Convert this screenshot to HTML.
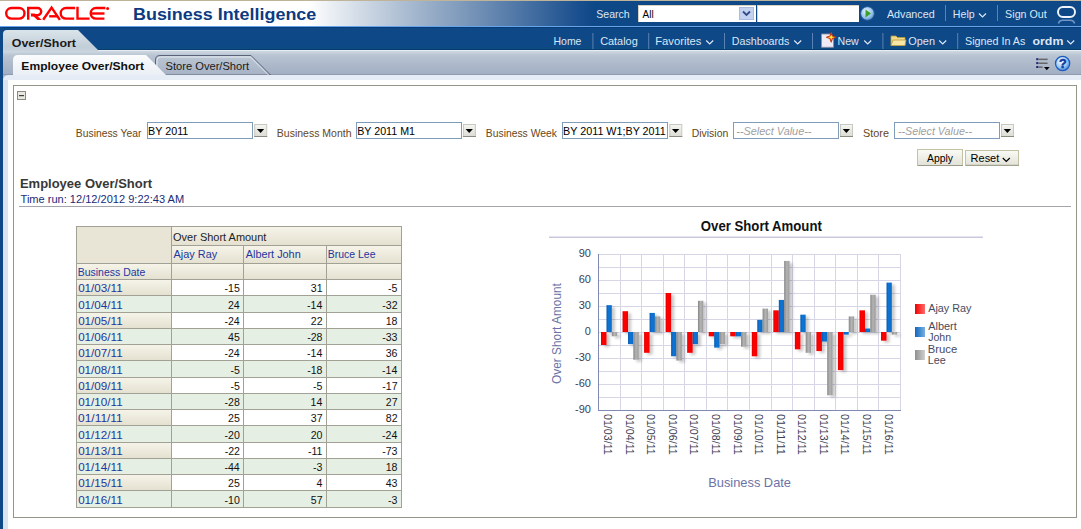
<!DOCTYPE html>
<html><head><meta charset="utf-8"><title>Oracle BI - Employee Over/Short</title>
<style>html,body{margin:0;padding:0;background:#fff;overflow:hidden}svg{display:block;font-family:"Liberation Sans",sans-serif}</style>
</head><body><svg width="1081" height="529" viewBox="0 0 1081 529" font-family="Liberation Sans, sans-serif"><defs>
<linearGradient id="hdr" x1="0" y1="0" x2="1081" y2="0" gradientUnits="userSpaceOnUse">
 <stop offset="0" stop-color="#ffffff"/><stop offset="0.285" stop-color="#ffffff"/>
 <stop offset="0.33" stop-color="#d4dde8"/><stop offset="0.38" stop-color="#a6b9cf"/>
 <stop offset="0.43" stop-color="#7c98ba"/><stop offset="0.48" stop-color="#4e76a6"/>
 <stop offset="0.535" stop-color="#1a4f8e"/><stop offset="0.55" stop-color="#0e4886"/>
 <stop offset="1" stop-color="#0e4886"/></linearGradient>
<linearGradient id="band" x1="0" y1="0" x2="0" y2="1">
 <stop offset="0" stop-color="#cdd8e1"/><stop offset="0.2" stop-color="#b8c4d2"/><stop offset="0.6" stop-color="#adb9ca"/><stop offset="1" stop-color="#a2aec2"/></linearGradient>
<linearGradient id="tab1" x1="0" y1="0" x2="0" y2="1">
 <stop offset="0" stop-color="#dae4ea"/><stop offset="0.8" stop-color="#c2ced8"/><stop offset="1" stop-color="#c6d2dc"/></linearGradient>
<linearGradient id="acttab" x1="0" y1="0" x2="0" y2="1">
 <stop offset="0" stop-color="#fbfcfd"/><stop offset="1" stop-color="#e6ecf4"/></linearGradient>
<linearGradient id="inact" x1="0" y1="0" x2="0" y2="1">
 <stop offset="0" stop-color="#bcc7d4"/><stop offset="1" stop-color="#a6b2c5"/></linearGradient>
<linearGradient id="hcell" x1="0" y1="0" x2="0" y2="1">
 <stop offset="0" stop-color="#f7f5ea"/><stop offset="1" stop-color="#e4e1d1"/></linearGradient>
<linearGradient id="btn" x1="0" y1="0" x2="0" y2="1">
 <stop offset="0" stop-color="#fbfbf6"/><stop offset="1" stop-color="#e2e2d8"/></linearGradient>
<linearGradient id="ddb" x1="0" y1="0" x2="0" y2="1">
 <stop offset="0" stop-color="#f6f6f2"/><stop offset="1" stop-color="#dcdcd4"/></linearGradient>
<linearGradient id="gred" x1="0" y1="0" x2="1" y2="0">
 <stop offset="0" stop-color="#e00000"/><stop offset="0.35" stop-color="#ff0000"/><stop offset="1" stop-color="#f20000"/></linearGradient>
<linearGradient id="gblue" x1="0" y1="0" x2="1" y2="0">
 <stop offset="0" stop-color="#0658b0"/><stop offset="0.4" stop-color="#0a74d4"/><stop offset="1" stop-color="#0a6cc8"/></linearGradient>
<linearGradient id="ggrey" x1="0" y1="0" x2="1" y2="0">
 <stop offset="0" stop-color="#888888"/><stop offset="0.5" stop-color="#b4b4b4"/><stop offset="1" stop-color="#9a9a9a"/></linearGradient>
<linearGradient id="lred" x1="0" y1="0" x2="1" y2="0">
 <stop offset="0" stop-color="#f00000"/><stop offset="1" stop-color="#ff6a6a"/></linearGradient>
<linearGradient id="lblue" x1="0" y1="0" x2="1" y2="0">
 <stop offset="0" stop-color="#1068c0"/><stop offset="1" stop-color="#7ab0e0"/></linearGradient>
<linearGradient id="lgrey" x1="0" y1="0" x2="1" y2="0">
 <stop offset="0" stop-color="#909090"/><stop offset="1" stop-color="#d0d0d0"/></linearGradient>
<linearGradient id="shadow" x1="0" y1="0" x2="1" y2="0">
 <stop offset="0" stop-color="#c8c8c8" stop-opacity="0.7"/><stop offset="1" stop-color="#e8e8e8" stop-opacity="0"/></linearGradient>
<filter id="ds" x="-20%" y="-20%" width="160%" height="160%"><feGaussianBlur in="SourceAlpha" stdDeviation="1.6"/><feOffset dx="3" dy="1.5"/><feComponentTransfer><feFuncA type="linear" slope="0.22"/></feComponentTransfer><feMerge><feMergeNode/><feMergeNode in="SourceGraphic"/></feMerge></filter>
<radialGradient id="helpg" cx="0.4" cy="0.35" r="0.7">
 <stop offset="0" stop-color="#ffffff"/><stop offset="0.6" stop-color="#9cc8f4"/><stop offset="1" stop-color="#3a7ed0"/></radialGradient>
<radialGradient id="gog" cx="0.4" cy="0.35" r="0.7">
 <stop offset="0" stop-color="#e8f4ff"/><stop offset="0.7" stop-color="#8ebce8"/><stop offset="1" stop-color="#4a84c4"/></radialGradient>
</defs>
<rect x="0" y="0" width="1081" height="529" fill="#ffffff"/>
<rect x="0" y="0" width="1081" height="1" fill="#bfb39a"/>
<rect x="0" y="1" width="1081" height="25" fill="url(#hdr)"/>
<rect x="0" y="26" width="1081" height="1" fill="#66a4ec"/>
<rect x="0" y="27" width="1081" height="22" fill="#0e4886"/>
<rect x="0" y="47" width="1081" height="2" fill="#0b4c82"/>
<rect x="0" y="27" width="1081" height="1" fill="#0a3c76"/>
<rect x="0" y="27" width="3" height="502" fill="#0e4886"/>
<rect x="3" y="80" width="5" height="449" fill="#dae4f0"/>
<rect x="97" y="49" width="984" height="1" fill="#083c70"/>
<rect x="98" y="50" width="983" height="1" fill="#e6ecf2"/>
<rect x="3" y="51" width="1078" height="23" fill="url(#band)"/>
<rect x="3" y="74" width="1078" height="1" fill="#8e9ab0"/>
<rect x="3" y="75" width="1078" height="5" fill="#e6ecf5"/>
<path d="M3,51 L3,34 Q3,30 7,30 L78,30 L98,50 L98,51 Z" fill="url(#tab1)"/>
<path d="M155.5,75 L155.5,60 Q155.5,55.5 160,55.5 L251,55.5 L270.5,75 Z" fill="url(#inact)" stroke="#5a6478" stroke-width="1"/>
<path d="M157,75 L157,60.5 Q157,57 160.5,57 L250.5,57 L268.5,75" fill="none" stroke="#f0f4f8" stroke-width="1" opacity="0.8"/>
<path d="M13,80 L13,60 Q13,55 18,55 L146,55 L166,75 L166,80 Z" fill="url(#acttab)"/>
<rect x="3" y="75" width="1078" height="5" fill="#e6ecf5"/>
<path d="M3,75 L8,75 Q3.5,75.5 3,80 Z" fill="#a9b5c6"/>
<rect x="13.5" y="85.5" width="1063" height="432" fill="#ffffff" stroke="#95958a" stroke-width="1"/>
<g fill="none" stroke="#ff0000" stroke-width="2.4"><rect x="6.2" y="8" width="18.3" height="10.6" rx="5.3"/><path d="M28.2,19.8 L28.2,8 L37.6,8 A3.6,3.6 0 0 1 37.6,15.2 L31,15.2"/><path d="M30.4,13.6 L34.6,13.6 L41.8,19.9 L37.4,19.9 Z" fill="#ff0000" stroke="none"/><path d="M43.2,19.8 L51.6,7.6 L59.9,19.8"/><path d="M49.2,16.3 L57.4,16.3"/><path d="M75.2,8 L66,8 A5.3,5.3 0 0 0 66,18.6 L74.2,18.6"/><path d="M77.5,6.8 L77.5,18.6 L89.6,18.6"/><path d="M105.4,8 L96,8 A5.3,5.3 0 0 0 96,18.6 L104.4,18.6"/><path d="M92,13.5 L104.5,13.5"/></g><circle cx="107.6" cy="8.4" r="1.5" fill="#ff0000"/>
<text x="133.00" y="19.90" font-size="17.00" fill="#0d3a80" font-weight="bold" textLength="183.32" lengthAdjust="spacingAndGlyphs" >Business Intelligence</text>
<text x="596.22" y="18.00" font-size="11.50" fill="#dce7f5" textLength="33.47" lengthAdjust="spacingAndGlyphs" >Search</text>
<rect x="638" y="5" width="118" height="17" fill="#ffffff"/><rect x="638" y="5" width="118" height="1" fill="#d8d0c0"/><rect x="638" y="5" width="1" height="17" fill="#d8d0c0"/>
<rect x="739.5" y="7.5" width="14" height="12" fill="#c2d2f0" stroke="#a8bce0"/>
<path d="M743,11.5 L746.5,15 L750,11.5" fill="none" stroke="#334c88" stroke-width="1.8"/>
<text x="642.58" y="18.00" font-size="11.50" fill="#000000" textLength="11.09" lengthAdjust="spacingAndGlyphs" >All</text>
<rect x="757" y="5" width="102" height="17" fill="#ffffff"/><rect x="757" y="5" width="102" height="1" fill="#d8d0c0"/><rect x="757" y="5" width="1" height="17" fill="#d8d0c0"/>
<circle cx="867.5" cy="13.5" r="6.8" fill="url(#gog)" stroke="#2a5a9a" stroke-width="0.8"/>
<path d="M865.5,9.5 L871,13.5 L865.5,17.5 Z" fill="#3aa02a"/>
<text x="886.88" y="18.00" font-size="11.50" fill="#dce7f5" textLength="47.81" lengthAdjust="spacingAndGlyphs" >Advanced</text>
<rect x="945" y="5" width="1" height="16" fill="#5a82b4"/>
<text x="952.83" y="18.00" font-size="11.50" fill="#dce7f5" textLength="21.81" lengthAdjust="spacingAndGlyphs" >Help</text>
<path d="M979.0,13.5 L982.5,17.0 L986.0,13.5" fill="none" stroke="#dce7f5" stroke-width="1.2"/>
<rect x="997" y="5" width="1" height="16" fill="#5a82b4"/>
<text x="1005.12" y="18.00" font-size="11.50" fill="#dce7f5" textLength="41.66" lengthAdjust="spacingAndGlyphs" >Sign Out</text>
<rect x="1058" y="7" width="17" height="9.9" rx="4.95" fill="none" stroke="#eef4fc" stroke-width="2"/>
<path d="M1058.5,23.5 Q1059,20.5 1063,20.3 L1070,20.3 Q1074,20.5 1074.5,23.5" fill="none" stroke="#6f96c6" stroke-width="1.6"/>
<text x="553.54" y="44.80" font-size="11.50" fill="#dce7f5" textLength="27.92" lengthAdjust="spacingAndGlyphs" >Home</text>
<rect x="592.4" y="33" width="1" height="16" fill="#5a82b4"/>
<rect x="648.2" y="33" width="1" height="16" fill="#5a82b4"/>
<rect x="724.0" y="33" width="1" height="16" fill="#5a82b4"/>
<rect x="812.0" y="33" width="1" height="16" fill="#5a82b4"/>
<rect x="882.4" y="33" width="1" height="16" fill="#5a82b4"/>
<rect x="957.2" y="33" width="1" height="16" fill="#5a82b4"/>
<text x="600.14" y="44.80" font-size="11.50" fill="#dce7f5" textLength="37.65" lengthAdjust="spacingAndGlyphs" >Catalog</text>
<text x="655.28" y="44.80" font-size="11.50" fill="#dce7f5" textLength="46.13" lengthAdjust="spacingAndGlyphs" >Favorites</text>
<path d="M706.2,40.5 L709.7,44.0 L713.2,40.5" fill="none" stroke="#dce7f5" stroke-width="1.2"/>
<text x="731.72" y="44.80" font-size="11.50" fill="#dce7f5" textLength="57.66" lengthAdjust="spacingAndGlyphs" >Dashboards</text>
<path d="M794.2,40.5 L797.7,44.0 L801.2,40.5" fill="none" stroke="#dce7f5" stroke-width="1.2"/>
<path d="M821.5,34 L830,34 L833.5,37.5 L833.5,47.3 L821.5,47.3 Z" fill="#ecebf6" stroke="#8c8ca4" stroke-width="0.9"/>
<path d="M831.2,32.6 L832.4,36.1 L835.9,37.3 L832.4,38.5 L831.2,42 L830,38.5 L826.5,37.3 L830,36.1 Z" fill="#ffe840" stroke="#c83a10" stroke-width="1.1" stroke-linejoin="round"/>
<text x="837.53" y="44.80" font-size="11.50" fill="#dce7f5" textLength="21.24" lengthAdjust="spacingAndGlyphs" >New</text>
<path d="M864.2,40.5 L867.7,44.0 L871.2,40.5" fill="none" stroke="#dce7f5" stroke-width="1.2"/>
<path d="M891,36 L896,36 L897.5,37.5 L905,37.5 L905,45.5 L891,45.5 Z" fill="#f2d98a" stroke="#b89a40" stroke-width="0.8"/>
<path d="M891,45.5 L893,40 L906,40 L905,45.5 Z" fill="#f8e6a6" stroke="#b89a40" stroke-width="0.8"/>
<text x="908.29" y="44.80" font-size="11.50" fill="#dce7f5" textLength="26.73" lengthAdjust="spacingAndGlyphs" >Open</text>
<path d="M939.2,40.5 L942.7,44.0 L946.2,40.5" fill="none" stroke="#dce7f5" stroke-width="1.2"/>
<text x="965.02" y="44.80" font-size="11.50" fill="#dce7f5" textLength="60.37" lengthAdjust="spacingAndGlyphs" >Signed In As</text>
<text x="1032.52" y="44.80" font-size="11.50" fill="#dce7f5" font-weight="bold" textLength="30.85" lengthAdjust="spacingAndGlyphs" >ordm</text>
<path d="M1067.2,40.5 L1070.7,44.0 L1074.2,40.5" fill="none" stroke="#dce7f5" stroke-width="1.2"/>
<text x="11.79" y="47.00" font-size="11.50" fill="#1a1a1a" font-weight="bold" textLength="64.16" lengthAdjust="spacingAndGlyphs" >Over/Short</text>
<text x="21.39" y="70.00" font-size="11.50" fill="#101010" font-weight="bold" textLength="122.65" lengthAdjust="spacingAndGlyphs" >Employee Over/Short</text>
<text x="165.50" y="70.00" font-size="11.50" fill="#1a1a1a" textLength="83.58" lengthAdjust="spacingAndGlyphs" >Store Over/Short</text>
<g><rect x="1038.8" y="58.6" width="8.8" height="1.5" fill="#666666"/><rect x="1038.8" y="62.5" width="8.8" height="1.5" fill="#666666"/><rect x="1038.8" y="66.4" width="3.8" height="1.5" fill="#666666"/><rect x="1036.2" y="58.2" width="2.2" height="2" fill="#262672"/><rect x="1036.2" y="62.1" width="2.2" height="2" fill="#262672"/><rect x="1036.2" y="66" width="2.2" height="2" fill="#262672"/><path d="M1044,67 L1049.6,67 L1046.8,70.2 Z" fill="#000000"/></g>
<circle cx="1062.6" cy="63.5" r="7.1" fill="url(#helpg)" stroke="#1c5cc0" stroke-width="1.3"/>
<text x="1062.7" y="67.9" font-size="12.5" font-weight="bold" fill="#0b3a9e" stroke="#0b3a9e" stroke-width="0.5" text-anchor="middle">?</text>
<rect x="17.5" y="91.5" width="8" height="8" fill="#e8e8e0" stroke="#8a8a80"/>
<rect x="19" y="95" width="5" height="1.2" fill="#404040"/>
<text x="75.85" y="136.80" font-size="11.50" fill="#66461a" textLength="65.51" lengthAdjust="spacingAndGlyphs" >Business Year</text>
<text x="276.84" y="136.80" font-size="11.50" fill="#66461a" textLength="74.64" lengthAdjust="spacingAndGlyphs" >Business Month</text>
<text x="485.85" y="136.80" font-size="11.50" fill="#66461a" textLength="71.03" lengthAdjust="spacingAndGlyphs" >Business Week</text>
<text x="691.64" y="136.80" font-size="11.50" fill="#66461a" textLength="36.74" lengthAdjust="spacingAndGlyphs" >Division</text>
<text x="863.01" y="136.80" font-size="11.50" fill="#66461a" textLength="25.97" lengthAdjust="spacingAndGlyphs" >Store</text>
<rect x="147.5" y="122.5" width="105.0" height="16" fill="#ffffff" stroke="#7f9db9"/><text x="148.12" y="134.70" font-size="11.50" fill="#000000" textLength="40.21" lengthAdjust="spacingAndGlyphs" >BY 2011</text>
<rect x="254.7" y="124.5" width="12" height="12" fill="url(#ddb)" stroke="#c8c8c0" stroke-width="1"/><rect x="254.2" y="136" width="13" height="1" fill="#8a8a80"/><path d="M256.9,129 L264.2,129 L260.6,133 Z" fill="#000000"/>
<rect x="356.5" y="122.5" width="105.0" height="16" fill="#ffffff" stroke="#7f9db9"/><text x="357.22" y="134.70" font-size="11.50" fill="#000000" textLength="57.80" lengthAdjust="spacingAndGlyphs" >BY 2011 M1</text>
<rect x="463.4" y="124.5" width="12" height="12" fill="url(#ddb)" stroke="#c8c8c0" stroke-width="1"/><rect x="462.9" y="136" width="13" height="1" fill="#8a8a80"/><path d="M465.6,129 L472.9,129 L469.2,133 Z" fill="#000000"/>
<rect x="562.5" y="122.5" width="105.0" height="16" fill="#ffffff" stroke="#7f9db9"/><text x="563.12" y="134.70" font-size="11.50" fill="#000000" textLength="102.61" lengthAdjust="spacingAndGlyphs" >BY 2011 W1;BY 2011</text>
<rect x="669.8" y="124.5" width="12" height="12" fill="url(#ddb)" stroke="#c8c8c0" stroke-width="1"/><rect x="669.3" y="136" width="13" height="1" fill="#8a8a80"/><path d="M672.0,129 L679.3,129 L675.6,133 Z" fill="#000000"/>
<rect x="733.5" y="122.5" width="105.0" height="16" fill="#ffffff" stroke="#7f9db9"/><text x="736.35" y="134.70" font-size="11.50" fill="#a0a0a0" font-style="italic" textLength="75.09" lengthAdjust="spacingAndGlyphs" >--Select Value--</text>
<rect x="840.5" y="124.5" width="12" height="12" fill="url(#ddb)" stroke="#c8c8c0" stroke-width="1"/><rect x="840.0" y="136" width="13" height="1" fill="#8a8a80"/><path d="M842.7,129 L850.0,129 L846.4,133 Z" fill="#000000"/>
<rect x="894.5" y="122.5" width="105.0" height="16" fill="#ffffff" stroke="#7f9db9"/><text x="897.95" y="134.70" font-size="11.50" fill="#a0a0a0" font-style="italic" textLength="74.08" lengthAdjust="spacingAndGlyphs" >--Select Value--</text>
<rect x="1001.5" y="124.5" width="12" height="12" fill="url(#ddb)" stroke="#c8c8c0" stroke-width="1"/><rect x="1001.0" y="136" width="13" height="1" fill="#8a8a80"/><path d="M1003.7,129 L1011.0,129 L1007.4,133 Z" fill="#000000"/>
<rect x="917.5" y="149.5" width="45" height="16" fill="url(#btn)" stroke="#c4c2a4"/>
<rect x="918" y="165" width="45" height="1" fill="#9a9a88"/>
<text x="926.98" y="161.60" font-size="11.50" fill="#000000" textLength="26.05" lengthAdjust="spacingAndGlyphs" >Apply</text>
<rect x="965.5" y="150.5" width="53" height="15" fill="url(#btn)" stroke="#c4c2a4"/>
<rect x="966" y="164.8" width="53" height="1" fill="#9a9a88"/>
<text x="970.60" y="161.60" font-size="11.50" fill="#000000" textLength="28.68" lengthAdjust="spacingAndGlyphs" >Reset</text>
<path d="M1002.8,158.0 L1006.3,161.5 L1009.8,158.0" fill="none" stroke="#000000" stroke-width="1.2"/>
<text x="19.93" y="187.50" font-size="12.50" fill="#383838" font-weight="bold" textLength="132.13" lengthAdjust="spacingAndGlyphs" >Employee Over/Short</text>
<text x="20.56" y="202.50" font-size="11.50" fill="#182c78" textLength="163.55" lengthAdjust="spacingAndGlyphs" >Time run: 12/12/2012 9:22:43 AM</text>
<rect x="19" y="206" width="1052" height="1" fill="#a4a4ac"/>
<rect x="76" y="226" width="326" height="53" fill="#e8e6d8"/>
<rect x="76" y="226" width="95" height="37" fill="#e8e5d6"/>
<rect x="171" y="226" width="231" height="19" fill="url(#hcell)"/>
<rect x="171" y="245" width="231" height="18" fill="url(#hcell)"/>
<rect x="76" y="263" width="326" height="16" fill="url(#hcell)"/>
<rect x="76" y="279" width="95" height="16" fill="url(#hcell)"/>
<rect x="171" y="279" width="231" height="16" fill="#ffffff"/>
<rect x="76" y="295" width="326" height="17" fill="#e6efe4"/>
<rect x="76" y="312" width="95" height="16" fill="url(#hcell)"/>
<rect x="171" y="312" width="231" height="16" fill="#ffffff"/>
<rect x="76" y="328" width="326" height="16" fill="#e6efe4"/>
<rect x="76" y="344" width="95" height="16" fill="url(#hcell)"/>
<rect x="171" y="344" width="231" height="16" fill="#ffffff"/>
<rect x="76" y="360" width="326" height="17" fill="#e6efe4"/>
<rect x="76" y="377" width="95" height="16" fill="url(#hcell)"/>
<rect x="171" y="377" width="231" height="16" fill="#ffffff"/>
<rect x="76" y="393" width="326" height="16" fill="#e6efe4"/>
<rect x="76" y="409" width="95" height="16" fill="url(#hcell)"/>
<rect x="171" y="409" width="231" height="16" fill="#ffffff"/>
<rect x="76" y="425" width="326" height="17" fill="#e6efe4"/>
<rect x="76" y="442" width="95" height="16" fill="url(#hcell)"/>
<rect x="171" y="442" width="231" height="16" fill="#ffffff"/>
<rect x="76" y="458" width="326" height="16" fill="#e6efe4"/>
<rect x="76" y="474" width="95" height="16" fill="url(#hcell)"/>
<rect x="171" y="474" width="231" height="16" fill="#ffffff"/>
<rect x="76" y="490" width="326" height="17" fill="#e6efe4"/>
<rect x="76" y="226" width="326" height="1" fill="#a2a196"/>
<rect x="171" y="245" width="231" height="1" fill="#a2a196"/>
<rect x="76" y="263" width="326" height="1" fill="#a2a196"/>
<rect x="76" y="279" width="326" height="1" fill="#a2a196"/>
<rect x="76" y="295" width="326" height="1" fill="#a2a196"/>
<rect x="76" y="312" width="326" height="1" fill="#a2a196"/>
<rect x="76" y="328" width="326" height="1" fill="#a2a196"/>
<rect x="76" y="344" width="326" height="1" fill="#a2a196"/>
<rect x="76" y="360" width="326" height="1" fill="#a2a196"/>
<rect x="76" y="377" width="326" height="1" fill="#a2a196"/>
<rect x="76" y="393" width="326" height="1" fill="#a2a196"/>
<rect x="76" y="409" width="326" height="1" fill="#a2a196"/>
<rect x="76" y="425" width="326" height="1" fill="#a2a196"/>
<rect x="76" y="442" width="326" height="1" fill="#a2a196"/>
<rect x="76" y="458" width="326" height="1" fill="#a2a196"/>
<rect x="76" y="474" width="326" height="1" fill="#a2a196"/>
<rect x="76" y="490" width="326" height="1" fill="#a2a196"/>
<rect x="76" y="507" width="326" height="1" fill="#a2a196"/>
<rect x="76" y="226" width="1" height="282" fill="#a2a196"/>
<rect x="171" y="226" width="1" height="282" fill="#a2a196"/>
<rect x="243" y="245" width="1" height="263" fill="#a2a196"/>
<rect x="326" y="245" width="1" height="263" fill="#a2a196"/>
<rect x="401" y="226" width="1" height="282" fill="#a2a196"/>
<text x="173.08" y="241.00" font-size="11.50" fill="#1e1e1e" textLength="93.29" lengthAdjust="spacingAndGlyphs" >Over Short Amount</text>
<text x="173.58" y="257.50" font-size="11.50" fill="#2236a0" textLength="43.65" lengthAdjust="spacingAndGlyphs" >Ajay Ray</text>
<text x="245.78" y="257.50" font-size="11.50" fill="#2236a0" textLength="54.93" lengthAdjust="spacingAndGlyphs" >Albert John</text>
<text x="327.74" y="257.50" font-size="11.50" fill="#2236a0" textLength="47.73" lengthAdjust="spacingAndGlyphs" >Bruce Lee</text>
<text x="77.74" y="276.00" font-size="11.50" fill="#2236a0" textLength="67.52" lengthAdjust="spacingAndGlyphs" >Business Date</text>
<text x="78.15" y="292.00" font-size="11.50" fill="#2236a0" textLength="44.53" lengthAdjust="spacingAndGlyphs" >01/03/11</text>
<text x="224.56" y="292.00" font-size="11.50" fill="#111111" textLength="15.29" lengthAdjust="spacingAndGlyphs" >-15</text>
<text x="310.75" y="292.00" font-size="11.50" fill="#111111" textLength="11.77" lengthAdjust="spacingAndGlyphs" >31</text>
<text x="388.04" y="292.00" font-size="11.50" fill="#111111" textLength="9.41" lengthAdjust="spacingAndGlyphs" >-5</text>
<text x="78.15" y="309.00" font-size="11.50" fill="#2236a0" textLength="44.53" lengthAdjust="spacingAndGlyphs" >01/04/11</text>
<text x="227.94" y="309.00" font-size="11.50" fill="#111111" textLength="11.77" lengthAdjust="spacingAndGlyphs" >24</text>
<text x="307.02" y="309.00" font-size="11.50" fill="#111111" textLength="15.29" lengthAdjust="spacingAndGlyphs" >-14</text>
<text x="382.24" y="309.00" font-size="11.50" fill="#111111" textLength="15.29" lengthAdjust="spacingAndGlyphs" >-32</text>
<text x="78.15" y="325.00" font-size="11.50" fill="#2236a0" textLength="44.53" lengthAdjust="spacingAndGlyphs" >01/05/11</text>
<text x="224.42" y="325.00" font-size="11.50" fill="#111111" textLength="15.29" lengthAdjust="spacingAndGlyphs" >-24</text>
<text x="310.76" y="325.00" font-size="11.50" fill="#111111" textLength="11.77" lengthAdjust="spacingAndGlyphs" >22</text>
<text x="385.69" y="325.00" font-size="11.50" fill="#111111" textLength="11.77" lengthAdjust="spacingAndGlyphs" >18</text>
<text x="78.15" y="341.00" font-size="11.50" fill="#2236a0" textLength="44.53" lengthAdjust="spacingAndGlyphs" >01/06/11</text>
<text x="228.08" y="341.00" font-size="11.50" fill="#111111" textLength="11.77" lengthAdjust="spacingAndGlyphs" >45</text>
<text x="307.17" y="341.00" font-size="11.50" fill="#111111" textLength="15.29" lengthAdjust="spacingAndGlyphs" >-28</text>
<text x="382.18" y="341.00" font-size="11.50" fill="#111111" textLength="15.29" lengthAdjust="spacingAndGlyphs" >-33</text>
<text x="78.15" y="357.00" font-size="11.50" fill="#2236a0" textLength="44.53" lengthAdjust="spacingAndGlyphs" >01/07/11</text>
<text x="224.42" y="357.00" font-size="11.50" fill="#111111" textLength="15.29" lengthAdjust="spacingAndGlyphs" >-24</text>
<text x="307.02" y="357.00" font-size="11.50" fill="#111111" textLength="15.29" lengthAdjust="spacingAndGlyphs" >-14</text>
<text x="385.70" y="357.00" font-size="11.50" fill="#111111" textLength="11.77" lengthAdjust="spacingAndGlyphs" >36</text>
<text x="78.15" y="374.00" font-size="11.50" fill="#2236a0" textLength="44.53" lengthAdjust="spacingAndGlyphs" >01/08/11</text>
<text x="230.44" y="374.00" font-size="11.50" fill="#111111" textLength="9.41" lengthAdjust="spacingAndGlyphs" >-5</text>
<text x="307.17" y="374.00" font-size="11.50" fill="#111111" textLength="15.29" lengthAdjust="spacingAndGlyphs" >-18</text>
<text x="382.02" y="374.00" font-size="11.50" fill="#111111" textLength="15.29" lengthAdjust="spacingAndGlyphs" >-14</text>
<text x="78.15" y="390.00" font-size="11.50" fill="#2236a0" textLength="44.53" lengthAdjust="spacingAndGlyphs" >01/09/11</text>
<text x="230.44" y="390.00" font-size="11.50" fill="#111111" textLength="9.41" lengthAdjust="spacingAndGlyphs" >-5</text>
<text x="313.04" y="390.00" font-size="11.50" fill="#111111" textLength="9.41" lengthAdjust="spacingAndGlyphs" >-5</text>
<text x="382.24" y="390.00" font-size="11.50" fill="#111111" textLength="15.29" lengthAdjust="spacingAndGlyphs" >-17</text>
<text x="78.15" y="406.00" font-size="11.50" fill="#2236a0" textLength="44.53" lengthAdjust="spacingAndGlyphs" >01/10/11</text>
<text x="224.57" y="406.00" font-size="11.50" fill="#111111" textLength="15.29" lengthAdjust="spacingAndGlyphs" >-28</text>
<text x="310.54" y="406.00" font-size="11.50" fill="#111111" textLength="11.77" lengthAdjust="spacingAndGlyphs" >14</text>
<text x="385.76" y="406.00" font-size="11.50" fill="#111111" textLength="11.77" lengthAdjust="spacingAndGlyphs" >27</text>
<text x="78.14" y="422.00" font-size="11.50" fill="#2236a0" textLength="44.55" lengthAdjust="spacingAndGlyphs" >01/11/11</text>
<text x="228.08" y="422.00" font-size="11.50" fill="#111111" textLength="11.77" lengthAdjust="spacingAndGlyphs" >25</text>
<text x="310.76" y="422.00" font-size="11.50" fill="#111111" textLength="11.77" lengthAdjust="spacingAndGlyphs" >37</text>
<text x="385.76" y="422.00" font-size="11.50" fill="#111111" textLength="11.77" lengthAdjust="spacingAndGlyphs" >82</text>
<text x="78.15" y="439.00" font-size="11.50" fill="#2236a0" textLength="44.53" lengthAdjust="spacingAndGlyphs" >01/12/11</text>
<text x="224.52" y="439.00" font-size="11.50" fill="#111111" textLength="15.29" lengthAdjust="spacingAndGlyphs" >-20</text>
<text x="310.65" y="439.00" font-size="11.50" fill="#111111" textLength="11.77" lengthAdjust="spacingAndGlyphs" >20</text>
<text x="382.02" y="439.00" font-size="11.50" fill="#111111" textLength="15.29" lengthAdjust="spacingAndGlyphs" >-24</text>
<text x="78.15" y="455.00" font-size="11.50" fill="#2236a0" textLength="44.53" lengthAdjust="spacingAndGlyphs" >01/13/11</text>
<text x="224.64" y="455.00" font-size="11.50" fill="#111111" textLength="15.29" lengthAdjust="spacingAndGlyphs" >-22</text>
<text x="308.01" y="455.00" font-size="11.50" fill="#111111" textLength="14.51" lengthAdjust="spacingAndGlyphs" >-11</text>
<text x="382.18" y="455.00" font-size="11.50" fill="#111111" textLength="15.29" lengthAdjust="spacingAndGlyphs" >-73</text>
<text x="78.15" y="471.00" font-size="11.50" fill="#2236a0" textLength="44.53" lengthAdjust="spacingAndGlyphs" >01/14/11</text>
<text x="224.42" y="471.00" font-size="11.50" fill="#111111" textLength="15.29" lengthAdjust="spacingAndGlyphs" >-44</text>
<text x="313.06" y="471.00" font-size="11.50" fill="#111111" textLength="9.41" lengthAdjust="spacingAndGlyphs" >-3</text>
<text x="385.69" y="471.00" font-size="11.50" fill="#111111" textLength="11.77" lengthAdjust="spacingAndGlyphs" >18</text>
<text x="78.15" y="487.00" font-size="11.50" fill="#2236a0" textLength="44.53" lengthAdjust="spacingAndGlyphs" >01/15/11</text>
<text x="228.08" y="487.00" font-size="11.50" fill="#111111" textLength="11.77" lengthAdjust="spacingAndGlyphs" >25</text>
<text x="316.42" y="487.00" font-size="11.50" fill="#111111" textLength="5.88" lengthAdjust="spacingAndGlyphs" >4</text>
<text x="385.70" y="487.00" font-size="11.50" fill="#111111" textLength="11.77" lengthAdjust="spacingAndGlyphs" >43</text>
<text x="78.15" y="504.00" font-size="11.50" fill="#2236a0" textLength="44.53" lengthAdjust="spacingAndGlyphs" >01/16/11</text>
<text x="224.52" y="504.00" font-size="11.50" fill="#111111" textLength="15.29" lengthAdjust="spacingAndGlyphs" >-10</text>
<text x="310.76" y="504.00" font-size="11.50" fill="#111111" textLength="11.77" lengthAdjust="spacingAndGlyphs" >57</text>
<text x="388.06" y="504.00" font-size="11.50" fill="#111111" textLength="9.41" lengthAdjust="spacingAndGlyphs" >-3</text>
<text x="700.86" y="231.10" font-size="14.00" fill="#111111" font-weight="bold" textLength="120.99" lengthAdjust="spacingAndGlyphs" >Over Short Amount</text>
<rect x="549" y="236.5" width="434" height="1.5" fill="#c9c9dd"/>
<rect x="598" y="254" width="303" height="1" fill="#d6d6e6"/>
<rect x="598" y="267" width="303" height="1" fill="#d6d6e6"/>
<rect x="598" y="280" width="303" height="1" fill="#d6d6e6"/>
<rect x="598" y="293" width="303" height="1" fill="#d6d6e6"/>
<rect x="598" y="306" width="303" height="1" fill="#d6d6e6"/>
<rect x="598" y="319" width="303" height="1" fill="#d6d6e6"/>
<rect x="598" y="332" width="303" height="1" fill="#d6d6e6"/>
<rect x="598" y="345" width="303" height="1" fill="#d6d6e6"/>
<rect x="598" y="358" width="303" height="1" fill="#d6d6e6"/>
<rect x="598" y="371" width="303" height="1" fill="#d6d6e6"/>
<rect x="598" y="384" width="303" height="1" fill="#d6d6e6"/>
<rect x="598" y="397" width="303" height="1" fill="#d6d6e6"/>
<rect x="598" y="410" width="303" height="1" fill="#d6d6e6"/>
<rect x="620" y="254" width="1" height="156" fill="#d6d6e6"/>
<rect x="641" y="254" width="1" height="156" fill="#d6d6e6"/>
<rect x="663" y="254" width="1" height="156" fill="#d6d6e6"/>
<rect x="684" y="254" width="1" height="156" fill="#d6d6e6"/>
<rect x="706" y="254" width="1" height="156" fill="#d6d6e6"/>
<rect x="727" y="254" width="1" height="156" fill="#d6d6e6"/>
<rect x="749" y="254" width="1" height="156" fill="#d6d6e6"/>
<rect x="771" y="254" width="1" height="156" fill="#d6d6e6"/>
<rect x="792" y="254" width="1" height="156" fill="#d6d6e6"/>
<rect x="814" y="254" width="1" height="156" fill="#d6d6e6"/>
<rect x="835" y="254" width="1" height="156" fill="#d6d6e6"/>
<rect x="857" y="254" width="1" height="156" fill="#d6d6e6"/>
<rect x="878" y="254" width="1" height="156" fill="#d6d6e6"/>
<rect x="900" y="254" width="1" height="156" fill="#d6d6e6"/>
<rect x="598" y="254" width="1" height="157" fill="#8088b4"/>
<rect x="598" y="410" width="303" height="1" fill="#8088b4"/>
<g filter="url(#ds)">
<rect x="601.00" y="332.00" width="5.50" height="13.00" fill="url(#gred)"/>
<rect x="606.50" y="305.13" width="5.30" height="26.87" fill="url(#gblue)"/>
<rect x="611.80" y="332.00" width="5.40" height="4.33" fill="url(#ggrey)"/>
<rect x="622.54" y="311.20" width="5.50" height="20.80" fill="url(#gred)"/>
<rect x="628.04" y="332.00" width="5.30" height="12.13" fill="url(#gblue)"/>
<rect x="633.34" y="332.00" width="5.40" height="27.73" fill="url(#ggrey)"/>
<rect x="644.08" y="332.00" width="5.50" height="20.80" fill="url(#gred)"/>
<rect x="649.58" y="312.93" width="5.30" height="19.07" fill="url(#gblue)"/>
<rect x="654.88" y="316.40" width="5.40" height="15.60" fill="url(#ggrey)"/>
<rect x="665.62" y="293.00" width="5.50" height="39.00" fill="url(#gred)"/>
<rect x="671.12" y="332.00" width="5.30" height="24.27" fill="url(#gblue)"/>
<rect x="676.42" y="332.00" width="5.40" height="28.60" fill="url(#ggrey)"/>
<rect x="687.16" y="332.00" width="5.50" height="20.80" fill="url(#gred)"/>
<rect x="692.66" y="332.00" width="5.30" height="12.13" fill="url(#gblue)"/>
<rect x="697.96" y="300.80" width="5.40" height="31.20" fill="url(#ggrey)"/>
<rect x="708.70" y="332.00" width="5.50" height="4.33" fill="url(#gred)"/>
<rect x="714.20" y="332.00" width="5.30" height="15.60" fill="url(#gblue)"/>
<rect x="719.50" y="332.00" width="5.40" height="12.13" fill="url(#ggrey)"/>
<rect x="730.24" y="332.00" width="5.50" height="4.33" fill="url(#gred)"/>
<rect x="735.74" y="332.00" width="5.30" height="4.33" fill="url(#gblue)"/>
<rect x="741.04" y="332.00" width="5.40" height="14.73" fill="url(#ggrey)"/>
<rect x="751.78" y="332.00" width="5.50" height="24.27" fill="url(#gred)"/>
<rect x="757.28" y="319.87" width="5.30" height="12.13" fill="url(#gblue)"/>
<rect x="762.58" y="308.60" width="5.40" height="23.40" fill="url(#ggrey)"/>
<rect x="773.32" y="310.33" width="5.50" height="21.67" fill="url(#gred)"/>
<rect x="778.82" y="299.93" width="5.30" height="32.07" fill="url(#gblue)"/>
<rect x="784.12" y="260.93" width="5.40" height="71.07" fill="url(#ggrey)"/>
<rect x="794.86" y="332.00" width="5.50" height="17.33" fill="url(#gred)"/>
<rect x="800.36" y="314.67" width="5.30" height="17.33" fill="url(#gblue)"/>
<rect x="805.66" y="332.00" width="5.40" height="20.80" fill="url(#ggrey)"/>
<rect x="816.40" y="332.00" width="5.50" height="19.07" fill="url(#gred)"/>
<rect x="821.90" y="332.00" width="5.30" height="9.53" fill="url(#gblue)"/>
<rect x="827.20" y="332.00" width="5.40" height="63.27" fill="url(#ggrey)"/>
<rect x="837.94" y="332.00" width="5.50" height="38.13" fill="url(#gred)"/>
<rect x="843.44" y="332.00" width="5.30" height="2.60" fill="url(#gblue)"/>
<rect x="848.74" y="316.40" width="5.40" height="15.60" fill="url(#ggrey)"/>
<rect x="859.48" y="310.33" width="5.50" height="21.67" fill="url(#gred)"/>
<rect x="864.98" y="328.53" width="5.30" height="3.47" fill="url(#gblue)"/>
<rect x="870.28" y="294.73" width="5.40" height="37.27" fill="url(#ggrey)"/>
<rect x="881.02" y="332.00" width="5.50" height="8.67" fill="url(#gred)"/>
<rect x="886.52" y="282.60" width="5.30" height="49.40" fill="url(#gblue)"/>
<rect x="891.82" y="332.00" width="5.40" height="2.60" fill="url(#ggrey)"/>
</g>
<text x="578.70" y="257.40" font-size="11.00" fill="#3c3c52" >90</text>
<text x="578.70" y="283.40" font-size="11.00" fill="#3c3c52" >60</text>
<text x="578.70" y="309.40" font-size="11.00" fill="#3c3c52" >30</text>
<text x="584.81" y="335.40" font-size="11.00" fill="#3c3c52" >0</text>
<text x="575.03" y="361.40" font-size="11.00" fill="#3c3c52" >-30</text>
<text x="575.03" y="387.40" font-size="11.00" fill="#3c3c52" >-60</text>
<text x="575.03" y="413.40" font-size="11.00" fill="#3c3c52" >-90</text>
<g transform="translate(0,0) rotate(-90)"><text x="-383.96" y="561.00" font-size="13.50" fill="#6b72a6" textLength="100.84" lengthAdjust="spacingAndGlyphs" >Over Short Amount</text></g>
<g transform="translate(604.09,0) rotate(90)"><text x="413.98" y="0.00" font-size="10.50" fill="#3c3c52" textLength="40.74" lengthAdjust="spacingAndGlyphs" >01/03/11</text></g>
<g transform="translate(625.66,0) rotate(90)"><text x="413.98" y="0.00" font-size="10.50" fill="#3c3c52" textLength="40.74" lengthAdjust="spacingAndGlyphs" >01/04/11</text></g>
<g transform="translate(647.23,0) rotate(90)"><text x="413.98" y="0.00" font-size="10.50" fill="#3c3c52" textLength="40.74" lengthAdjust="spacingAndGlyphs" >01/05/11</text></g>
<g transform="translate(668.80,0) rotate(90)"><text x="413.98" y="0.00" font-size="10.50" fill="#3c3c52" textLength="40.74" lengthAdjust="spacingAndGlyphs" >01/06/11</text></g>
<g transform="translate(690.37,0) rotate(90)"><text x="413.98" y="0.00" font-size="10.50" fill="#3c3c52" textLength="40.74" lengthAdjust="spacingAndGlyphs" >01/07/11</text></g>
<g transform="translate(711.94,0) rotate(90)"><text x="413.98" y="0.00" font-size="10.50" fill="#3c3c52" textLength="40.74" lengthAdjust="spacingAndGlyphs" >01/08/11</text></g>
<g transform="translate(733.51,0) rotate(90)"><text x="413.98" y="0.00" font-size="10.50" fill="#3c3c52" textLength="40.74" lengthAdjust="spacingAndGlyphs" >01/09/11</text></g>
<g transform="translate(755.09,0) rotate(90)"><text x="413.98" y="0.00" font-size="10.50" fill="#3c3c52" textLength="40.74" lengthAdjust="spacingAndGlyphs" >01/10/11</text></g>
<g transform="translate(776.66,0) rotate(90)"><text x="413.98" y="0.00" font-size="10.50" fill="#3c3c52" textLength="40.76" lengthAdjust="spacingAndGlyphs" >01/11/11</text></g>
<g transform="translate(798.23,0) rotate(90)"><text x="413.98" y="0.00" font-size="10.50" fill="#3c3c52" textLength="40.74" lengthAdjust="spacingAndGlyphs" >01/12/11</text></g>
<g transform="translate(819.80,0) rotate(90)"><text x="413.98" y="0.00" font-size="10.50" fill="#3c3c52" textLength="40.74" lengthAdjust="spacingAndGlyphs" >01/13/11</text></g>
<g transform="translate(841.37,0) rotate(90)"><text x="413.98" y="0.00" font-size="10.50" fill="#3c3c52" textLength="40.74" lengthAdjust="spacingAndGlyphs" >01/14/11</text></g>
<g transform="translate(862.94,0) rotate(90)"><text x="413.98" y="0.00" font-size="10.50" fill="#3c3c52" textLength="40.74" lengthAdjust="spacingAndGlyphs" >01/15/11</text></g>
<g transform="translate(884.51,0) rotate(90)"><text x="413.98" y="0.00" font-size="10.50" fill="#3c3c52" textLength="40.74" lengthAdjust="spacingAndGlyphs" >01/16/11</text></g>
<text x="708.25" y="487.30" font-size="13.50" fill="#6b72a6" textLength="82.71" lengthAdjust="spacingAndGlyphs" >Business Date</text>
<rect x="915" y="304" width="10" height="10" fill="url(#lred)"/>
<rect x="915" y="327" width="10" height="10" fill="url(#lblue)"/>
<rect x="915" y="350" width="10" height="10" fill="url(#lgrey)"/>
<text x="928.28" y="312.00" font-size="11.50" fill="#474a5e" textLength="43.15" lengthAdjust="spacingAndGlyphs" >Ajay Ray</text>
<text x="928.28" y="329.60" font-size="11.50" fill="#474a5e" textLength="28.49" lengthAdjust="spacingAndGlyphs" >Albert</text>
<text x="928.13" y="341.20" font-size="11.50" fill="#474a5e" textLength="22.96" lengthAdjust="spacingAndGlyphs" >John</text>
<text x="927.78" y="353.10" font-size="11.50" fill="#474a5e" textLength="29.42" lengthAdjust="spacingAndGlyphs" >Bruce</text>
<text x="927.81" y="364.20" font-size="11.50" fill="#474a5e" textLength="18.07" lengthAdjust="spacingAndGlyphs" >Lee</text></svg></body></html>
